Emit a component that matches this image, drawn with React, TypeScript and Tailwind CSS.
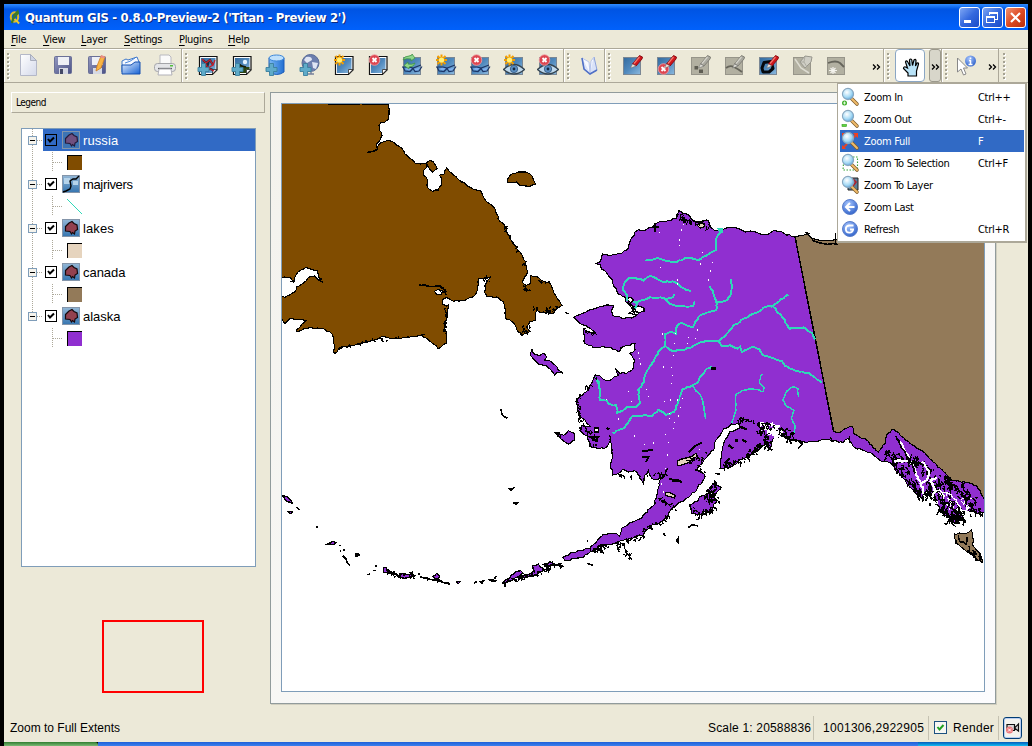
import React from "react";

type Pt = [number, number];

const parse = (s: string): Pt[] =>
  s.trim().split(/\s+/).map((p) => p.split(",").map(Number) as Pt);

function random(seed: number) {
  let v = seed;
  return () => {
    v = (v * 16807) % 2147483647;
    return v / 2147483647;
  };
}

/* Adds small jogs between the survey points so that a coast looks rugged. */
function coast(s: string, amp = 3, closed = true, seed = 17): string {
  const pts = parse(s);
  const rnd = random(seed);
  rnd();
  const out: Pt[] = [];
  const last = closed ? pts.length : pts.length - 1;
  for (let i = 0; i < last; i++) {
    const a = pts[i];
    const b = pts[(i + 1) % pts.length];
    const len = Math.hypot(b[0] - a[0], b[1] - a[1]);
    out.push(a);
    if (len > 150 || len < 8) continue;
    const n = Math.max(1, Math.floor(len / 7));
    for (let k = 1; k < n; k++) {
      const t = k / n;
      out.push([
        a[0] + (b[0] - a[0]) * t + (rnd() - 0.5) * 2 * amp,
        a[1] + (b[1] - a[1]) * t + (rnd() - 0.5) * 2 * amp,
      ]);
    }
  }
  if (!closed) out.push(pts[pts.length - 1]);
  return "M" + out.map((p) => p[0].toFixed(1) + " " + p[1].toFixed(1)).join("L") + (closed ? "Z" : "");
}

/* Short strokes scattered along a line: skerries, fjords, islets. */
function scatter(line: string, spread: number, count: number, size: number, seed: number): string {
  const pts = parse(line);
  const rnd = random(seed);
  rnd();
  let d = "";
  for (let i = 0; i < count; i++) {
    const f = rnd() * (pts.length - 1);
    const k = Math.min(pts.length - 2, Math.floor(f));
    const t = f - k;
    const x = pts[k][0] + (pts[k + 1][0] - pts[k][0]) * t + (rnd() - 0.5) * 2 * spread;
    const y = pts[k][1] + (pts[k + 1][1] - pts[k][1]) * t + (rnd() - 0.5) * 2 * spread;
    d += `M${x.toFixed(1)} ${y.toFixed(1)}l${((rnd() - 0.3) * size).toFixed(1)} ${((rnd() - 0.3) * size).toFixed(1)}l${((rnd() - 0.5) * size).toFixed(1)} ${(rnd() * size).toFixed(1)}`;
  }
  return d;
}

const RUSSIA =
  "30,38 355,43 357,65 354,88 345,96 333,98 327,107 329,122 336,136 331,148 321,160 321,174 332,158 345,154 362,153 378,164 395,175 405,192 420,205 436,220 450,222 468,219 470,228 462,240 462,256 472,268 472,292 488,304 505,300 514,285 513,262 508,256 522,252 530,234 545,250 575,276 610,298 632,303 640,320 660,342 676,358 688,392 703,404 712,430 725,452 740,475 757,497 768,515 770,535 773,548 768,556 757,578 768,586 780,582 782,556 800,560 815,572 838,578 850,602 860,622 877,646 862,655 850,670 835,672 830,655 828,670 805,665 800,655 796,690 780,695 770,712 780,725 758,735 742,724 735,705 720,690 706,684 705,655 700,635 685,622 650,618 643,605 648,580 662,560 645,566 625,567 622,600 612,618 590,628 575,632 550,634 530,622 518,628 518,642 530,648 536,645 532,680 522,700 530,735 528,760 505,776 490,762 470,745 455,735 400,743 360,745 335,740 310,752 275,760 240,768 215,770 195,790 190,785 193,765 188,735 165,718 120,712 80,724 78,720 108,692 90,688 60,686 45,700 40,695 30,680 30,620 45,622 75,605 80,590 100,580 115,562 135,558 148,572 155,568 146,560 142,543 108,532 85,545 70,575 60,562 30,562";

const ALASKA =
  "765,110 740,105 725,95 700,92 685,103 665,103 645,95 615,96 590,84 565,82 540,90 525,92 510,80 505,62 490,62 470,66 455,58 445,45 430,40 415,32 408,55 385,62 360,65 340,78 320,88 290,92 272,118 265,145 245,160 215,166 187,162 182,185 168,190 182,194 185,208 200,218 212,234 228,265 235,282 256,292 256,304 268,316 280,328 296,340 286,348 275,354 245,354 218,345 215,330 222,318 205,315 175,322 140,335 102,352 120,370 150,385 168,402 150,398 132,388 130,400 135,430 160,443 190,440 215,444 235,455 250,440 285,430 285,450 270,460 283,480 278,508 260,520 240,520 228,508 235,525 210,542 190,538 178,526 165,525 155,550 140,575 120,590 108,605 112,630 122,650 135,660 150,680 126,675 120,692 142,708 150,740 175,746 200,742 212,722 208,705 215,740 218,770 212,790 218,825 240,818 248,808 265,816 290,814 300,835 310,850 315,825 325,812 335,835 350,838 370,828 383,805 374,828 360,840 355,865 348,895 345,910 330,925 310,945 305,955 270,968 245,985 238,1008 228,1000 190,1003 165,1030 150,1045 130,1050 90,1060 68,1072 75,1081 130,1072 150,1056 165,1055 180,1035 200,1035 235,1025 270,1015 310,1005 330,978 365,965 385,945 395,925 440,895 470,870 495,830 487,818 465,810 487,790 500,772 520,750 528,720 548,692 575,672 600,672 597,686 570,695 555,720 545,755 542,780 540,805 570,803 600,780 630,765 655,750 675,730 690,750 700,715 725,710 750,720 775,722 800,728 860,718 910,728 925,715 930,725 940,740 995,760 1020,782 1050,788 1065,810 1090,835 1110,862 1150,900 1160,870 1180,890 1200,930 1245,970 1270,955 1265,930 1290,935 1315,940 1336,935 1334,898 1310,858 1280,848 1235,840 1210,815 1150,755 1110,730 1080,705 1062,687 1042,700 1035,730 1015,757 980,720 940,700 938,680 920,685 900,698 880,694";

const RIVERS = [
  "540,85 540,98 530,112 528,150 510,160 475,180 440,174 410,186 370,180 350,174 316,182",
  "262,302 262,288 250,270 255,245 268,234 300,236 310,242 330,228 350,236 375,246 398,244 415,252 430,264 452,274",
  "278,306 300,302 330,292 362,292 375,296 400,292 402,282",
  "375,298 390,312 415,318 440,320 460,318 464,304",
  "285,325 290,310 278,304",
  "573,238 576,260 570,288 562,300 532,308 528,330 500,338 476,350 460,380 440,376 425,368 412,376 408,402 390,396 376,402 376,436 355,456 342,484 320,514 312,545 295,570 298,598 300,610 290,620 262,620 248,632 232,638 228,616 205,612 200,602 180,600 180,570 172,540 165,532",
  "510,258 520,280 528,308",
  "376,438 398,454 450,444 475,430 500,422 534,424 560,402 580,378 610,356 650,338 670,324 700,316 722,298 745,284",
  "698,318 730,356 750,386 790,382 815,398 826,418",
  "534,424 545,438 570,436 592,446 600,440 606,456 640,440 658,448 670,466 725,482 735,498 765,512 800,518 825,532 844,548",
  "516,500 500,506 485,526 470,550 450,562 428,566 415,605 402,636 378,644 355,630 335,648 310,646 275,650 255,680 218,700",
  "456,558 475,578 488,602 492,630 498,655",
  "666,522 658,550 672,562 670,574 630,566 606,572 588,584 588,630 575,670",
  "776,590 774,566 762,560 740,574 728,600 740,620 762,632 754,655 766,680 762,700",
  "165,532 178,545 176,566",
];

const WHITE_DOTS =
  "359,98 425,90 419,120 418,136 361,203 488,157 482,192 518,187 512,213 505,240 413,240 412,252 430,73 369,402 408,400 445,412 467,416 473,390 403,430 443,430 296,459 298,476 301,492 402,466 396,502 370,501 397,527 394,551 266,574 320,568 325,590 392,600 373,604 275,604 413,600 428,595 421,622 389,640 389,656 415,648 403,667 235,657 200,598 401,686 377,703 385,727 283,708 313,733 341,729 383,765 479,748 364,852 378,806 372,876";

const ALEUTIANS = [
  "38,287 50,290 64,302 66,309 50,305",
  "54,334 68,336 60,342",
  "173,432 190,424 197,428 190,434",
  "257,462 266,462 268,467 258,468",
  "340,502 350,503 354,518 342,517",
  "382,528 400,520 436,528 400,536",
  "420,518 428,516 426,524",
  "488,530 500,520 510,528 500,538",
  "560,545 571,545 565,551",
  "630,544 641,543 636,550",
  "658,540 680,541 676,545",
  "695,550 715,536 735,516 752,512 760,520 735,534 720,544",
  "756,526 775,524 790,514 788,498 805,492 812,502 824,510 800,524 765,534",
  "830,492 842,486 850,492 836,498",
  "718,267 730,265 724,271",
  "730,308 742,309 738,313",
];

function MapCanvas() {
  return (
    <svg
      className="block h-[587px] w-[702px] bg-white"
      viewBox="282 104 702 587"
      shapeRendering="crispEdges"
      fill="none"
      strokeWidth="3.4"
      stroke="#000"
    >
      <g transform="translate(270 90) scale(.33333)">
        <path d={coast(RUSSIA, 2)} fill="#804c00" />
        <path d="M175 43H270M275 44h60" />
        <path d="M468 219l12-8 10 4 12 20-14 11-10-10z" fill="#804c00" />
        <path d={coast("325,175 310,184 292,188", 1, false)} strokeWidth="5" />
        <path d={coast("712,268 722,254 745,246 768,246 785,256 797,282 778,290 750,286 740,276 714,278", 1)} fill="#804c00" />
        <path d={coast("448,584 485,590 510,588 526,600 528,615", 2, false)} strokeWidth="5" />
        <path d="M494 604l10-6 14 6-4 8-14 2z" fill="#fff" />
        <path d="M572 280l8-6M456 732l10 2" />
        <path d={scatter("505,590 522,610", 10, 8, 8, 5)} />
        <path d={scatter("640,560 658,570", 7, 6, 8, 9)} />
        <path d={scatter("764,590 775,602", 6, 9, 9, 19)} />
        <path d={scatter("755,728 775,710", 8, 10, 8, 29)} />
        <path d={scatter("800,565 838,580", 5, 8, 7, 39)} />
        <path d={scatter("795,655 835,660 862,648", 7, 18, 9, 33)} />
        <path d={scatter("700,400 735,470 768,540", 3, 24, 6, 34)} />
        <path d={scatter("200,775 300,750 455,738", 3, 26, 7, 35)} />
        <path d={scatter("525,650 525,740", 4, 14, 7, 36)} />
        <path d="M148 572l12 5M146 560l8 16M886 668l6 2M60 575l14-2" />
        <path d="M780 795l6-18 4 14 18 6 14-8 8 12-6 10h14l14 12 8 6 4 10 14 10-16-2-8 8-10-14-16-14-22-4z" fill="#902fd0" />
      </g>
      <g transform="translate(540 200) scale(.33333)">
        <path d="M765 110L803 103 815 115 835 120 860 122 900 118 1340 100V905L1280 870 1100 790 1015 762 960 730 880 694Z" fill="#937a59" />
        <path d={coast(ALASKA, 2.4)} fill="#902fd0" />
        <path d="M765 110L880 690M805 103l-4-4 8 2M815 115l6 8 20 6 20 4 18-2 14 2M886 100v28" strokeWidth="4.5" />
        <path d={coast("48,700 70,706 85,692 102,700 103,720 85,732 70,722", 2)} fill="#902fd0" />
        <path d="M258 296l14-4 10 8-10 8zM262 306l10 6 16 18-4 6zM276 322l20-4 16 6 0 10-18 4zM164 684h12v12h-12zM268 340l10-8 8 12z" fill="#fff" />
        <path d="M470 74l10-4 12 2 2 8-14 4z" fill="#e6d4be" strokeWidth="4" />
        <path d="M412 784l10-6 32-8 14-10 4 8-26 20-24 8h-10z" fill="#e6d4be" strokeWidth="4" />
        <path d="M376 878l14 0 16 8-2 8-28-8z" fill="#e6d4be" strokeWidth="4" />
        {RIVERS.map((r, i) => (
          <path key={i} d={coast(r, 2, false, 11 + i)} stroke="#2fd8b8" strokeWidth={i > 10 ? 4.5 : 5.8} />
        ))}
        <path d="M534 86h14v12h-8z" fill="#2fd8b8" stroke="#2fd8b8" />
        {parse(WHITE_DOTS).map(([x, y]) => (
          <path key={x + "-" + y} d={`M${x - 1.5} ${y}h3`} stroke="#fff" />
        ))}
        <path d="M515 505h10v3h-10zM336 80l20 2M344 70v26M422 60h20M432 50v20M152 712h22l-8 10zM200 684l8 4M306 754l30-4 2 4M306 770h20l-8 16M446 756l18-18 22-10M388 838l26 2 12 8M396 842h26" strokeWidth="6" />
        <path d={scatter("415,35 435,60 470,68 510,75", 7, 28, 10, 71)} />
        <path d={scatter("120,640 125,685 160,700 165,740", 7, 22, 9, 72)} />
        <path d={scatter("110,600 165,530", 4, 12, 8, 73)} />
        <path d={scatter("110,600 118,650", 4, 14, 8, 173)} />
        <path d={scatter("130,385 165,405", 5, 10, 8, 74)} />
        <path d={scatter("205,825 310,830 380,820", 5, 20, 8, 75)} />
        <path d={scatter("150,1050 210,1040 310,1005", 6, 60, 9, 76)} />
        <path d={scatter("310,985 360,965 390,940", 4, 22, 8, 176)} />
        <path d={scatter("235,1040 275,1070", 8, 20, 9, 77)} strokeWidth="4" />
        <path d={scatter("350,890 400,920", 8, 16, 9, 78)} />
        <path d={scatter("500,745 470,790 490,820", 7, 16, 8, 79)} />
        <path d={scatter("440,780 475,768", 5, 10, 9, 80)} strokeWidth="4" />
        <path d={scatter("670,680 700,690 725,705", 14, 38, 13, 61)} stroke="#fff" strokeWidth="8" />
        <path d={scatter("650,690 680,672 735,695 760,715", 12, 70, 10, 62)} strokeWidth="4" />
        <path d={scatter("675,700 685,740", 9, 26, 9, 162)} strokeWidth="4" />
        <path d={scatter("665,735 640,750 600,782 545,800", 7, 60, 9, 63)} strokeWidth="4" />
        <path d={scatter("590,662 610,655 640,665", 4, 14, 9, 64)} strokeWidth="4" />
        <path d="M565 735l14 10M584 722h10M606 720l14 6M555 790l14-16M600 680l20 8" strokeWidth="7" />
        <path d="M775 722l12 10-14 14M735 715l30 6" strokeWidth="5" />
        <path d={coast("448,915 470,905 478,890 500,882 525,885 530,905 515,930 480,945 455,940", 4)} fill="#902fd0" />
        <path d={coast("505,870 520,850 543,862 528,880", 3)} fill="#902fd0" />
        <path d={scatter("525,855 510,880 500,895 530,895", 11, 60, 8, 81)} />
        <path d={scatter("455,920 475,945 530,920", 7, 40, 8, 82)} />
        <path d="M445 982l12-8 18 4M470 960l10-6M525 820l14 2M522 842l6 8M410 1022l4-6v10zM370 998l6 10M356 970l8 6M330 985l10 4M140 1024h4M142 1090l16 6" strokeWidth="5" />
        <path d={scatter("0,1100 30,1088 65,1096", 4, 22, 8, 83)} strokeWidth="5" />
        <path d="M78 338l8 4" />
      </g>
      <g transform="translate(800 400) scale(.33333)">
        <path d={scatter("285,190 330,240 365,290", 13, 48, 14, 90)} strokeWidth="4" />
        <path d={scatter("400,270 440,320 480,350", 22, 100, 13, 91)} strokeWidth="4" />
        <path d={scatter("245,155 300,180 350,180 390,210", 14, 74, 13, 92)} strokeWidth="4" />
        <path d={scatter("370,240 430,240 470,260 520,300", 18, 90, 13, 93)} strokeWidth="4" />
        <path d={coast("298,120 315,155 340,195 348,225 362,250 380,240 388,215 365,185", 3, false)} stroke="#fff" strokeWidth="6" />
        <path d={coast("288,108 305,145 330,180 345,220", 2, false)} strokeWidth="5" />
        <path d={coast("282,182 325,184", 3, false)} stroke="#fff" strokeWidth="7" />
        <path d={coast("362,250 372,285 395,305 405,275 392,245 410,232", 3, false)} stroke="#fff" strokeWidth="7" />
        <path d={coast("400,270 440,278 470,300 482,330 508,336", 3, false)} stroke="#fff" strokeWidth="4" />
        <path d={scatter("400,280 450,300 480,320 510,310", 20, 26, 9, 94)} stroke="#fff" />
        <path d={scatter("380,260 385,295", 7, 18, 12, 95)} strokeWidth="5" />
        <path d={scatter("415,330 465,360 490,345", 8, 44, 9, 96)} strokeWidth="4" />
        <path d={scatter("500,290 520,330 540,330", 12, 30, 10, 97)} />
        <path d="M544 278v8M547 340v10M434 370l5 6M390 310v8M90 112l6 8M148 108v22M0 128h8" strokeWidth="4" />
        <path d={coast("464,402 485,400 505,398 514,390 518,402 518,435 540,460 547,488 530,478 495,450 468,430", 2)} fill="#937a59" />
        <path d={coast("475,405 480,425 498,432 502,412", 2, false)} strokeWidth="5" />
        <path d={scatter("495,440 515,455 540,475", 7, 24, 8, 98)} strokeWidth="4" />
      </g>
      <g transform="translate(270 400) scale(.33333)">
        {ALEUTIANS.map((a, i) => (
          <path key={i} d={coast(a, 1.5, true, 51 + i)} fill="#902fd0" strokeWidth="4" />
        ))}
        <path d="M692 26l4 16 6 8 10 4M856 98l10 0 6 8v8l-8-6zM138 380l5 2M80 322l8 8M208 437h4M210 454h3M222 447v6M218 467l10 10 4 12 8 8M292 524l8-2M310 512h8M314 498h6M450 530l20 6 40 8 30 9M448 518v6M612 549l8-4M678 528l-4 10M730 266l1-4M850 492l20 6M350 517l18 6 12-2" strokeWidth="5" />
        <path d={scatter("340,508 380,525 435,528", 6, 30, 7, 101)} strokeWidth="4" />
        <path d={scatter("700,548 760,530 825,510 850,490", 5, 46, 8, 102)} strokeWidth="4" />
        <path d={scatter("450,533 500,536 540,552", 2, 12, 6, 103)} strokeWidth="4" />
      </g>
    </svg>
  );
}

/* ---------- icons ---------- */

function Svg({ children, className = "size-[22px]" }: { children: React.ReactNode; className?: string }) {
  return (
    <svg viewBox="0 0 22 22" className={className + " shrink-0"} fill="none">
      {children}
    </svg>
  );
}

function Defs() {
  return (
    <svg className="absolute size-0">
      <defs>
        <linearGradient id="sea" x1="0" y1="0" x2="1" y2="1">
          <stop offset="0" stopColor="#336a9e" />
          <stop offset=".5" stopColor="#5089bd" />
          <stop offset="1" stopColor="#8bb9de" />
        </linearGradient>
        <linearGradient id="lake" x1="0" y1="0" x2="0" y2="1">
          <stop offset="0" stopColor="#93b7d6" />
          <stop offset="1" stopColor="#3575b0" />
        </linearGradient>
        <linearGradient id="page" x1="0" y1="0" x2="1" y2="1">
          <stop offset="0" stopColor="#fff" />
          <stop offset="1" stopColor="#d4d9ea" />
        </linearGradient>
        <linearGradient id="steel" x1="0" y1="0" x2="1" y2="1">
          <stop offset="0" stopColor="#9499c0" />
          <stop offset="1" stopColor="#4b5286" />
        </linearGradient>
        <linearGradient id="box" x1="0" y1="0" x2="1" y2="1">
          <stop offset="0" stopColor="#eaf3ff" />
          <stop offset="1" stopColor="#1561d3" />
        </linearGradient>
        <linearGradient id="tube" x1="0" y1="0" x2="1" y2="0">
          <stop offset="0" stopColor="#7bb9f5" />
          <stop offset="1" stopColor="#226fd2" />
        </linearGradient>
        <radialGradient id="lens" cx=".4" cy=".35" r=".7">
          <stop offset="0" stopColor="#fff" />
          <stop offset=".6" stopColor="#a6daf5" />
          <stop offset="1" stopColor="#5b9fd4" />
        </radialGradient>
        <radialGradient id="ball" cx=".4" cy=".3" r=".8">
          <stop offset="0" stopColor="#a7c6ff" />
          <stop offset="1" stopColor="#2458c4" />
        </radialGradient>
      </defs>
    </svg>
  );
}

const Plus = () => (
  <path d="M4.500 9.500h4v4h3.500v4h-3.500v4h-4v-4h-3.500v-4h3.500z" fill="#5fabc9" stroke="#3b7f9d" strokeWidth=".9" />
);
const StarFull = () => (
  <g>
    <path d="M6.500 .5v11M1 6h11M2.500 2l8 8M10.500 2l-8 8" stroke="#f59f00" strokeWidth="2" />
    <circle cx="6.500" cy="6" r="2.600" fill="#fff27a" />
  </g>
);
const Ban = ({ x = 0, y = 0 }: { x?: number; y?: number }) => (
  <g transform={`translate(${x} ${y})`}>
    <circle cx="6.500" cy="6" r="5.300" fill="#dd4650" stroke="#f0a0a4" strokeWidth=".8" />
    <path d="M4.500 4l4 4M8.500 4l-4 4" stroke="#fff" strokeWidth="1.800" />
  </g>
);
const SheetFrame = () => (
  <g>
    <path d="M2.500 2.500h17.500v13.500l-4.500 4.500h-13z" fill="#fff" stroke="#111" strokeWidth="1.200" />
    <path d="M4 4h14.500v11.500h-3.500v3.500H4z" fill="url(#sea)" />
    <path d="M15.500 20v-4.500h4.500z" fill="#fff" stroke="#222" strokeWidth=".8" />
  </g>
);
const Square = ({ gray = false }: { gray?: boolean }) => (
  <rect x="2.500" y="3.500" width="17" height="17" fill={gray ? "#b2b0a1" : "url(#sea)"} stroke={gray ? "#97958a" : "#7a8794"} />
);
const Pencil = ({ gray = false }: { gray?: boolean }) => (
  <g>
    <path d="M11.500 10L18.500 1.500l3 1.500-.5 2L15 12z" fill={gray ? "#a9a89f" : "#d0161c"} stroke={gray ? "#7c7b73" : "#86080e"} strokeWidth=".9" />
    <path d="M13 9.500l5.500-6.500" stroke={gray ? "#d4d3ca" : "#f27b70"} strokeWidth="1.200" />
    <path d="M11.500 10L9.500 14l5.500-2z" fill={gray ? "#e2e1da" : "#f6e9de"} stroke="#666" strokeWidth=".5" />
  </g>
);
const Specs = () => (
  <g>
    <path d="M3 15l5 1.500 3-2-3-1zM12 15l4 2 3-3z" fill="#7fb0f2" />
    <path d="M1 13l7 0 4 1 8-3M2 13l2 4 5 .5 3-3 2 3 4-.5 3-4.500" stroke="#1b3568" strokeWidth="1.200" />
  </g>
);
const Eye = () => (
  <g>
    <path d="M.5 15.500q10.500-10 21 0q-10.500 9-21 0z" fill="#bed8ec" stroke="#33434f" strokeWidth="1.500" />
    <circle cx="11" cy="15" r="3.700" fill="#5b90c4" stroke="#33567c" strokeWidth=".8" />
    <circle cx="11" cy="15" r="1.400" fill="#152a44" />
  </g>
);

const fileIcons: React.ReactNode[] = [
  <g>
    <path d="M2.500 .5h10l6 6v15h-16z" fill="url(#page)" stroke="#b4b8c8" />
    <path d="M12.500 .5v6h6z" fill="#cfd4e4" stroke="#a9aebd" />
  </g>,
  <g>
    <rect x="2.500" y="2.500" width="17" height="17" rx="1" fill="url(#steel)" stroke="#6b7198" />
    <rect x="6" y="3" width="11" height="8" fill="#eef0f6" />
    <rect x="7" y="14" width="9" height="6" fill="#d6d9e3" />
    <rect x="8" y="15" width="3" height="5" fill="#434866" />
  </g>,
  <g>
    <rect x="2.500" y="2.500" width="17" height="17" rx="1" fill="url(#steel)" stroke="#6b7198" />
    <rect x="6" y="3" width="11" height="8" fill="#eef0f6" />
    <rect x="7" y="14" width="9" height="6" fill="#d6d9e3" />
    <path d="M10 17l1-5 4-10 4 1-4 11z" fill="#f9b544" stroke="#cf7d22" strokeWidth=".8" />
    <path d="M15 1l4 1.500-.8 2-4-1z" fill="#e98d86" />
  </g>,
  <g>
    <path d="M2 7l4-2 2 1 9-3 2 5v10H2z" fill="#f6f9ff" stroke="#3f78ca" />
    <path d="M2 11l9 0 4-3h5v12H2z" fill="url(#box)" stroke="#1550b0" />
    <path d="M5 9q5-1 10-5" stroke="#4a88dc" />
  </g>,
  <g>
    <path d="M6 10V1h9l2 2v7z" fill="#fafafa" stroke="#b9b9c0" />
    <rect x=".5" y="9.500" width="21" height="8" rx="3" fill="#e4e5e8" stroke="#a4a5a9" />
    <path d="M4 14.500h14" stroke="#606267" strokeWidth="1.300" />
    <path d="M5 15h12l1 6H4z" fill="#fff" stroke="#b1b1b8" />
    <rect x="16" y="11" width="3" height="1.500" fill="#53c13a" />
  </g>,
];

const layerIcons: React.ReactNode[] = [
  <g>
    <SheetFrame />
    <path d="M6 6l3 3 4-3 3 5M8 10l3 4 5 2M12 6l-2 8" stroke="#222a3a" strokeWidth="2.200" />
    <path d="M5 5l4 4 4-3 3 5 2-5M8 9l3 5 6 3M16 11l-5 3" stroke="#c4202c" strokeWidth="1.300" />
    <Plus />
  </g>,
  <g>
    <SheetFrame />
    <circle cx="14" cy="8" r="2.200" fill="#e4f3ff" />
    <path d="M4 12q2-3 5-2l4 3 5.500 0v2.500h-3.500v3.500H4z" fill="#2b4412" />
    <path d="M8 10l3 2 4 1" stroke="#151c0c" strokeWidth="1.500" />
    <Plus />
  </g>,
  <g>
    <path d="M4 4v14q8 5 15 0V4z" fill="url(#tube)" stroke="#1c5db9" />
    <ellipse cx="11.500" cy="4" rx="7.500" ry="3" fill="#bfe0fb" stroke="#3c87da" />
    <Plus />
  </g>,
  <g>
    <circle cx="11.500" cy="9" r="8.500" fill="#6d7fae" stroke="#5b6d97" />
    <path d="M7 3q6-1 6 3l-5 3-3-3zM13 8l6 1-2 6-3-1z" fill="#dfe5f4" />
    <path d="M12 17v3h-3M15 20h-6" stroke="#77819c" strokeWidth="1.500" />
    <Plus />
  </g>,
  <g>
    <SheetFrame />
    <StarFull />
  </g>,
  <g>
    <SheetFrame />
    <Ban x={1} />
  </g>,
  <g>
    <Square />
    <Specs />
    <path d="M2 6q1-4 6-4l3-1v-1l3 4-4 3v-2q-5-1-8 1zM14 9q-1 4-6 4v2L3 11.500 7 8v2q4 1 7-1z" fill="#8fd58a" stroke="#3f9445" strokeWidth=".8" />
  </g>,
  <g>
    <Square />
    <Specs />
    <StarFull />
  </g>,
  <g>
    <Square />
    <Specs />
    <Ban x={1} />
  </g>,
  <g>
    <Square />
    <Eye />
    <StarFull />
  </g>,
  <g>
    <Square />
    <Eye />
    <Ban x={1} />
  </g>,
];

const editIcons: React.ReactNode[] = [
  <g>
    <Square />
    <Pencil />
  </g>,
  <g>
    <Square />
    <Ban x={2} y={9} />
    <Pencil />
  </g>,
  <g>
    <Square gray />
    <path d="M5.500 12h3.500v3.500H5.500zM10 15.500h4v3.500h-4z" fill="#5e5d53" />
    <Pencil gray />
  </g>,
  <g>
    <Square gray />
    <path d="M3 14q4-3 8-1t8 5" stroke="#66655b" strokeWidth="1.800" />
    <Pencil gray />
  </g>,
  <g>
    <Square />
    <path d="M7 8.500l7-1 2 7-4 3.500H6l-1-4z" stroke="#05080c" strokeWidth="3" strokeLinejoin="round" />
    <Pencil />
  </g>,
  <g>
    <Square gray />
    <path d="M4 5l6 9 8 5" stroke="#dddcd2" strokeWidth="1.500" />
    <path d="M9 8l5-6 7 1-1 5-6 6z" fill="#cfcec5" stroke="#97968d" />
    <path d="M14 2l-1 6-4 0M13 8l3 5" stroke="#a5a49a" strokeWidth=".8" />
  </g>,
  <g>
    <Square gray />
    <path d="M3 9q8-3 12 0l4 4" stroke="#66655b" strokeWidth="1.800" />
    <path d="M8 13v7M4 16.500h8M5.500 14l5 5M10.500 14l-5 5" stroke="#f3f2ec" strokeWidth="1.200" />
  </g>,
];

function Lens() {
  return (
    <g>
      <path d="M12.500 12.500l5.500 5.500" stroke="#80602f" strokeWidth="3.600" strokeLinecap="round" />
      <path d="M13 13l5 5" stroke="#f0bb6a" strokeWidth="2" strokeLinecap="round" />
      <circle cx="9" cy="8" r="5.600" fill="url(#lens)" stroke="#89a7bf" strokeWidth="1.100" />
    </g>
  );
}

const menuIcons: React.ReactNode[] = [
  <g>
    <Lens />
    <circle cx="5.500" cy="17" r="2.500" fill="#3fae2a" />
    <path d="M4 17h3M5.500 15.500v3" stroke="#e8ffe0" strokeWidth=".9" />
  </g>,
  <g>
    <Lens />
    <rect x="3" y="16.500" width="4.500" height="2" fill="#5fd83a" stroke="#2f9a1c" strokeWidth=".6" />
  </g>,
  <g>
    <path d="M4 4l4 4M18 4l-4 4M4 18l4-4" stroke="#e0442a" strokeWidth="2" />
    <path d="M3 3h5L3 8zM19 3v5l-5-5zM3 19v-4l4 4z" fill="#f04020" />
    <Lens />
  </g>,
  <g>
    <path d="M5 5h13.500v13H4z" stroke="#36a336" strokeWidth="1.100" strokeDasharray="1.500 1.500" />
    <Lens />
  </g>,
  <g>
    <path d="M9 4h10v12H9z" fill="#5b7f98" stroke="#222" />
    <path d="M14 5l3 3-3 4" stroke="#b3212b" strokeWidth="1.600" />
    <Lens />
  </g>,
  <g>
    <circle cx="11" cy="11" r="7.500" fill="url(#ball)" stroke="#5a7ecb" />
    <path d="M15.500 11H7.500M11 7l-4 4 4 4" stroke="#fff" strokeWidth="2" />
  </g>,
  <g>
    <circle cx="11" cy="11" r="7.500" fill="url(#ball)" stroke="#5a7ecb" />
    <path d="M14.500 7.500H10a3.600 3.600 0 1 0 4 4M11 11.500h4" stroke="#fff" strokeWidth="1.800" />
  </g>,
];

const menuItems = [
  ["Zoom In", "Ctrl++"],
  ["Zoom Out", "Ctrl+-"],
  ["Zoom Full", "F"],
  ["Zoom To Selection", "Ctrl+F"],
  ["Zoom To Layer", ""],
  ["Zoom Last", ""],
  ["Refresh", "Ctrl+R"],
];

/* ---------- window parts ---------- */

function TitleButton({ close, children }: { close?: boolean; children: React.ReactNode }) {
  return (
    <div
      className={
        "size-[21px] rounded-[3px] border border-white " +
        (close
          ? "bg-linear-to-br from-[#f0906f] via-[#dd4a22] to-[#b92d0a]"
          : "bg-linear-to-br from-[#7fa6f4] via-[#3468de] to-[#1a4bc8]")
      }
    >
      <svg viewBox="0 0 19 19" className="size-[19px]" fill="none" stroke="#fff" shapeRendering={close ? "auto" : "crispEdges"}>
        {children}
      </svg>
    </div>
  );
}

function TitleBar() {
  return (
    <div className="flex h-[26px] shrink-0 items-center bg-linear-to-b from-[#2f8bff] via-[#0054e3] via-20% to-[#0061fc] pr-[2px] pl-[4px]">
      <svg viewBox="0 0 14 16" className="mr-[4px] h-[16px] w-[13px]" fill="none">
        <ellipse cx="7" cy="8" rx="4" ry="5" stroke="#d9bb2b" strokeWidth="2.200" />
        <path d="M3 14l3-9 5-5 1 4-5 6-2 5z" fill="#3f7a24" />
        <path d="M7 10l5 5" stroke="#e8c832" strokeWidth="2" />
      </svg>
      <div className="grow whitespace-nowrap pt-px font-['DejaVu_Sans_Condensed','DejaVu_Sans',sans-serif] text-[13px] font-bold tracking-[-0.32px] text-white [font-stretch:condensed] [text-shadow:1px_1px_0_#0b2a80]">
        Quantum GIS - 0.8.0-Preview-2 ('Titan - Preview 2')
      </div>
      <div className="flex gap-[2px]">
        <TitleButton>
          <path d="M4 13.500h7" strokeWidth="3" />
        </TitleButton>
        <TitleButton>
          <path d="M6.500 7V4.500h8v7H12M6 5h9" />
          <path d="M3.500 8.500h8v6h-8zM3 9h9" />
        </TitleButton>
        <TitleButton close>
          <path d="M5 5l9 9M14 5l-9 9" strokeWidth="2.200" />
        </TitleButton>
      </div>
    </div>
  );
}

function MenuBar() {
  const items: [string, string][] = [
    ["File", "w-[32px]"],
    ["View", "w-[38px]"],
    ["Layer", "w-[43px]"],
    ["Settings", "w-[55px]"],
    ["Plugins", "w-[49px]"],
    ["Help", "w-[40px]"],
  ];
  return (
    <div className="flex h-[18px] shrink-0 items-center pt-[2px] pl-[7px] text-[11px] tracking-[-0.3px]">
      {items.map(([t, w]) => (
        <div key={t} className={w}>
          <span className="underline underline-offset-2">{t[0]}</span>
          {t.slice(1)}
        </div>
      ))}
    </div>
  );
}

function Handle() {
  return (
    <div className="flex w-[8px] shrink-0 flex-col items-center gap-[2px]">
      {[0, 1, 2, 3, 4, 5, 6].map((i) => (
        <div key={i} className="size-[2px] bg-[#a5a293] shadow-[1px_1px_0_#fff]" />
      ))}
    </div>
  );
}

function Section({ width, children }: { width: string; children?: React.ReactNode }) {
  return (
    <div className={width + " flex shrink-0 items-center overflow-hidden border-r border-r-[#aca899] shadow-[inset_1px_0_0_#fff]"}>
      <Handle />
      {children}
    </div>
  );
}

const Cell = ({ children }: { children: React.ReactNode }) => (
  <div className="flex w-[34px] shrink-0 justify-center pb-px">
    <Svg>{children}</Svg>
  </div>
);

const More = () => (
  <svg viewBox="0 0 8 6" className="mt-[2px] h-[6px] w-[9px]" fill="none" stroke="#000" strokeWidth="1.300">
    <path d="M.5.500L3 3 .5 5.500M4.500.500L7 3 4.500 5.500" />
  </svg>
);

function ToolBar() {
  return (
    <div className="flex h-[35px] shrink-0 border-y border-y-[#aca899] shadow-[inset_0_1px_0_#fff]">
      <Section width="w-[178px]">
        {fileIcons.map((n, i) => (
          <Cell key={i}>{n}</Cell>
        ))}
      </Section>
      <Section width="w-[382px]">
        <div className="ml-[1px] flex">
          {layerIcons.map((n, i) => (
            <Cell key={i}>{n}</Cell>
          ))}
        </div>
      </Section>
      <Section width="w-[41px]">
        <Cell>
          <path d="M4 4l2 11 6 5 7-4L16 3l-4 10z" fill="#d9e2f8" stroke="#8ba1da" />
          <path d="M4 4l7 4 1 11M16 3l-3 4-1 12" fill="#f7f9ff" stroke="#b9c7ec" />
          <path d="M4 4l2 11 6 5 7-4" stroke="#5070c6" strokeWidth="1.500" />
        </Cell>
      </Section>
      <Section width="w-[279px]">
        <div className="ml-[2px] flex">
          {editIcons.map((n, i) => (
            <Cell key={i}>{n}</Cell>
          ))}
        </div>
        <div className="ml-[19px]">
          <More />
        </div>
      </Section>
      <Section width="w-[58px]">
        <div className="ml-[3px] flex h-[33px] w-[30px] items-center justify-center rounded-[4px] border border-[#8aa6c4] bg-white">
          <Svg className="mt-[2px] ml-[3px] size-[22px]">
            <path
              d="M7 20v-3L2.500 12.500q0-2 2-1.500L6.500 12 4.500 6q.5-2 2-.5L9 10 8.500 4q1-2 2.300 0L11.500 9.500 13 4q1.500-1.500 2 .5L14.500 10 16 7q1.800-.5 1.500 1L15.500 15v5z"
              fill="#b9e3f8"
              stroke="#000"
              strokeWidth="1.200"
            />
          </Svg>
        </div>
        <div className="ml-[4px] flex h-[33px] w-[12px] items-center justify-center rounded-[3px] border border-[#9b998c] bg-[#d8d6ca]">
          <More />
        </div>
      </Section>
      <Section width="w-[57px]">
        <div className="ml-[5px] flex items-center">
          <Svg>
            <circle cx="15.500" cy="6" r="5.500" fill="url(#ball)" />
            <path d="M15.500 5.500V10M15.500 2.500v1.500M13.500 9.500h4M14 5.500h2" stroke="#fff" strokeWidth="1.500" />
            <path d="M2.500 3v14l3.500-3 2.500 6 2.500-1-2.500-6h4z" fill="#fff" stroke="#888" />
          </Svg>
          <div className="ml-[11px]">
            <More />
          </div>
        </div>
      </Section>
      <div className="flex items-center pl-[1px]">
        <Handle />
      </div>
    </div>
  );
}

const layers: { name: string; color: string; spacing: string }[] = [
  { name: "russia", color: "bg-[#804c00]", spacing: "tracking-[0.1px]" },
  { name: "majrivers", color: "", spacing: "tracking-[-0.35px]" },
  { name: "lakes", color: "bg-[#e6d4be]", spacing: "tracking-[0.1px]" },
  { name: "canada", color: "bg-[#937a59]", spacing: "tracking-[-0.05px]" },
  { name: "alaska", color: "bg-[#902fd0]", spacing: "tracking-[0px]" },
];

function LayerTree() {
  return (
    <div className="ml-[10px] h-[439px] w-[235px] border border-[#7f9db9] bg-white font-['Liberation_Sans',Arial,sans-serif] text-[13px]">
      {layers.map(({ name, color, spacing }, i) => {
        const selected = i === 0;
        const river = color === "";
        return (
          <div key={name}>
            <div className="flex h-[22px]">
              <svg viewBox="0 0 21 22" className="h-[22px] w-[21px] shrink-0" shapeRendering="crispEdges" fill="none">
                <path d={i === 4 ? "M10.500 0v11" : "M10.500 0v22"} stroke="#aca899" strokeDasharray="1 1" />
                <path d="M15 11.500h5" stroke="#aca899" strokeDasharray="1 1" />
                <rect x="6.500" y="7.500" width="8" height="8" fill="#f5f3ec" stroke="#7f9db9" />
                <path d="M8 11.500h5" stroke="#000" />
              </svg>
              <div className={"flex grow items-center pl-[2px] " + (selected ? "bg-[#316ac5] text-white" : "")}>
                <svg viewBox="0 0 12 12" className="size-[12px]" fill="none">
                  <rect x=".5" y=".5" width="11" height="11" fill={selected ? "#316ac5" : "#fff"} stroke="#000" />
                  <path d="M3 5l2 2.500L9 3.500" stroke="#000" strokeWidth="2" />
                </svg>
                <svg viewBox="0 0 18 18" className="ml-[5px] size-[18px]" fill="none">
                  <rect x=".5" y=".5" width="17" height="17" fill={selected ? "#3d74b4" : "url(#lake)"} stroke="#8495aa" />
                  {river ? (
                    <g>
                      <path d="M2 3h6v6H2zM11 6h5v4h-5z" fill="#b5d3ea" />
                      <path d="M1 17l3-1 4-2 1-3-1-5 3-2 3 0 3-3" stroke="#000" strokeWidth="1.400" />
                    </g>
                  ) : (
                    <path
                      d="M7 4l3-1.500 2 2 3 1.500 .5 4.500-2.500 1.500-.5 3-2-1.500-1 1.500-1.500-2.500-4.500-.5 0-4.500 2-2z"
                      fill={selected ? "#705080" : "#93414f"}
                      stroke={selected ? "#241c3c" : "#16090c"}
                      strokeWidth="1.200"
                    />
                  )}
                </svg>
                <span className={"ml-[3px] pt-[2px] " + spacing}>{name}</span>
              </div>
            </div>
            <div className="flex h-[22px] items-center">
              <svg viewBox="0 0 45 22" className="h-[22px] w-[45px] shrink-0" shapeRendering="crispEdges">
                {i < 4 && <path d="M10.500 0v22" stroke="#aca899" strokeDasharray="1 1" />}
                <path d="M30.500 1v20M31 11.500h9" fill="none" stroke="#aca899" strokeDasharray="1 1" />
              </svg>
              {river ? (
                <svg viewBox="0 0 15 15" className="size-[15px]" shapeRendering="crispEdges">
                  <path d="M0 0l15 15" stroke="#2fd8b8" strokeWidth="1.200" />
                </svg>
              ) : (
                <div className={"size-[15px] border-t border-l border-black " + color} />
              )}
            </div>
          </div>
        );
      })}
    </div>
  );
}

function ZoomMenu() {
  return (
    <div className="absolute top-[83px] left-[837px] h-[160px] w-[190px] border border-r-2 border-b-2 border-[#aca899] bg-white p-[2px] text-[11px] tracking-[-0.3px]">
      {menuItems.map(([label, key], i) => (
        <div key={label} className={"flex h-[22px] w-[184px] items-center " + (i === 2 ? "bg-[#316ac5] text-white" : "")}>
          <Svg className="ml-[-1px] size-[22px]">{menuIcons[i]}</Svg>
          <span className="ml-[3px] w-[114px] pt-[2px]">{label}</span>
          <span className="pt-[2px]">{key}</span>
        </div>
      ))}
    </div>
  );
}

function StatusBar() {
  return (
    <div className="flex h-[29px] shrink-0 items-center pl-[6px] font-['Liberation_Sans',Arial,sans-serif] text-[12px] tracking-[0.3px]">
      <span className="w-[698px] tracking-[0px]">Zoom to Full Extents</span>
      <span className="w-[106px] whitespace-nowrap border-r border-r-[#c5c2b2] py-[3px] tracking-[0.18px]">Scale 1: 20588836</span>
      <span className="w-[115px] whitespace-nowrap border-r border-r-[#c5c2b2] py-[3px] pl-[9px]">1001306,2922905</span>
      <svg viewBox="0 0 13 13" className="ml-[5px] size-[13px]" fill="none">
        <rect x=".5" y=".5" width="12" height="12" fill="#f6f6f2" stroke="#1c5180" />
        <path d="M3.500 6l2 2.500L9.500 4" stroke="#21a121" strokeWidth="2" />
      </svg>
      <span className="ml-[6px] w-[46px] border-r border-r-[#c5c2b2] py-[3px]">Render</span>
      <div className="ml-[4px] flex h-[22px] w-[19px] items-center justify-center rounded-[3px] border border-[#003c74] bg-[#f4f3ee] shadow-[inset_0_0_0_1px_#b9cdf0]">
        <svg viewBox="0 0 15 12" className="h-[12px] w-[15px] shrink-0" fill="none">
          <path d="M2 2.500h7.500v6H2zM9.500 6l4-4v7z" fill="#d6d6d6" stroke="#111" strokeWidth="1.200" />
          <circle cx="4.500" cy="8" r="3.500" fill="#ee7a7e" />
          <path d="M3 6.500l3 3M6 6.500l-3 3" stroke="#fff" />
        </svg>
      </div>
    </div>
  );
}

export default function App() {
  return (
    <div className="relative flex h-[746px] w-[1032px] flex-col overflow-hidden bg-black px-[4px] pt-[4px] font-['DejaVu_Sans_Condensed','DejaVu_Sans',sans-serif] text-black [font-stretch:condensed]">
      <Defs />
      <div className="flex h-[738px] w-[1024px] flex-col bg-[#ece9d8]">
        <TitleBar />
        <MenuBar />
        <ToolBar />
        <div className="flex h-[630px] shrink-0 pt-[9px] pl-[7px]">
          <div className="w-[259px] shrink-0">
            <div className="flex h-[21px] w-[254px] items-center border border-t-white border-r-[#aca899] border-b-[#aca899] border-l-white pl-[4px] text-[10px] tracking-[-0.5px]">
              Legend
            </div>
            <div className="pt-[15px]">
              <LayerTree />
            </div>
            <div className="mt-[53px] ml-[91px] h-[73px] w-[102px] border-2 border-[#ff0000]" />
          </div>
          <div className="h-[612px] w-[726px] border border-[#919b9c] bg-linear-to-br from-[#f3f2ec] to-[#fcfcfe] p-[10px] shadow-[1px_1px_0_#d0cebf]">
            <div className="h-[589px] w-[704px] border border-[#7f9db9]">
              <MapCanvas />
            </div>
          </div>
        </div>
        <StatusBar />
      </div>
      <div className="flex h-[4px] w-[1024px] shrink-0">
        <div className="w-[94px] rounded-tr-[3px] bg-linear-to-b from-[#2f7d2f] to-[#7cba76]" />
        <div className="grow bg-linear-to-b from-[#1f5fd8] to-[#3a80ee]" />
        <div className="w-[110px] bg-linear-to-b from-[#0c59b9] to-[#18bdf2]" />
      </div>
      <ZoomMenu />
    </div>
  );
}
